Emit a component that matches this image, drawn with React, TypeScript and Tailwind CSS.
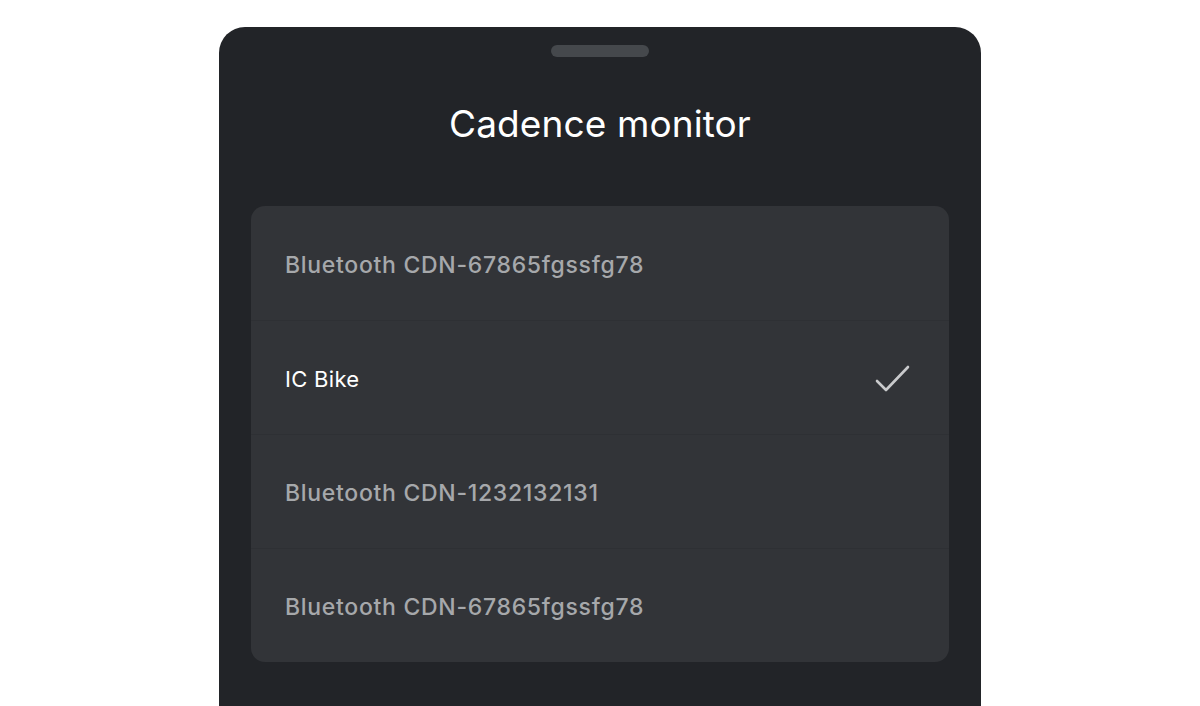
import { useState } from "react";

interface Device {
  id: string;
  name: string;
}

const devices: Device[] = [
  { id: "d1", name: "Bluetooth CDN-67865fgssfg78" },
  { id: "d2", name: "IC Bike" },
  { id: "d3", name: "Bluetooth CDN-1232132131" },
  { id: "d4", name: "Bluetooth CDN-67865fgssfg78" },
];

function Check() {
  return (
    <svg width="36" height="30" viewBox="0 0 36 30" fill="none" className="text-[#c9cacc]">
      <path d="M2 16 L11 25 L33 2" stroke="currentColor" strokeWidth="2.6" strokeLinecap="round" strokeLinejoin="round" />
    </svg>
  );
}

export default function App() {
  const [selected, setSelected] = useState("d2");

  return (
    <div className="h-[706px] overflow-hidden bg-white font-['Inter','Liberation_Sans',sans-serif]">
      <div className="mx-auto mt-[27px] flex h-[679px] w-[762px] flex-col items-center rounded-t-[26px] bg-[#222428]">
        <div className="mt-[18px] h-[12px] w-[98px] rounded-full bg-[#45484c]" />
        <h1 className="mt-[44px] text-[37px] leading-[46px] font-normal tracking-[0.1px] text-white">Cadence monitor</h1>

        <div className="mt-[59px] w-[698px] overflow-hidden rounded-[14px] bg-[#323438]">
          {devices.map((d, i) => {
            const active = d.id === selected;
            return (
              <button
                key={d.id}
                onClick={() => setSelected(d.id)}
                className={`flex h-[114px] w-full items-center justify-between pt-[4px] pl-[34px] pr-[38px] text-left ${i > 0 ? "border-t border-[#2e3034]" : ""}`}
              >
                <span
                  className={
                    active
                      ? "text-[22px] font-normal tracking-[0.3px] text-white"
                      : "text-[23px] font-medium tracking-[0.7px] text-[#a6a8ab]"
                  }
                >
                  {d.name}
                </span>
                {active && <Check />}
              </button>
            );
          })}
        </div>
      </div>
    </div>
  );
}
